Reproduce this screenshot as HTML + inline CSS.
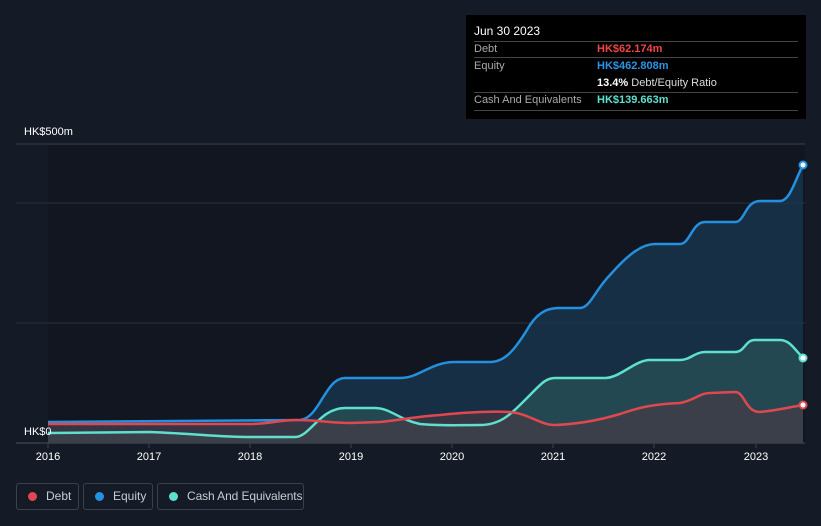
<!DOCTYPE html>
<html><head><style>
html,body{margin:0;background:#151b26;width:821px;height:526px;overflow:hidden;font-family:"Liberation Sans",sans-serif;position:relative}
.tt{position:absolute;left:466px;top:15px;width:340px;height:104px;background:#000;color:#fff;font-size:12px}
.tt .r{position:absolute;left:8px;right:8px;border-top:1px solid #444}
.lg{position:absolute;top:483px;height:27px;border:1px solid #3a414c;border-radius:3px;color:#c8ccd2;font-size:12px;line-height:25px;box-sizing:border-box;white-space:nowrap}
.lg i{display:inline-block;width:9px;height:9px;border-radius:50%;margin:0 9px 0 11px;vertical-align:-1px}
</style></head><body>
<svg width="821" height="526" style="position:absolute;left:0;top:0">
<rect x="48" y="144" width="757" height="299" fill="#111620"/>
<line x1="16" y1="144" x2="805" y2="144" stroke="#3a404a"/>
<line x1="16" y1="203" x2="805" y2="203" stroke="#2a303a"/>
<line x1="16" y1="323" x2="805" y2="323" stroke="#2a303a"/>
<line x1="16" y1="443" x2="805" y2="443" stroke="#4a505a"/>
<g fill="#fff" font-size="11" text-anchor="middle">
<text x="48" y="460">2016</text><text x="149" y="460">2017</text><text x="250" y="460">2018</text><text x="351" y="460">2019</text><text x="452" y="460">2020</text><text x="553" y="460">2021</text><text x="654" y="460">2022</text><text x="756" y="460">2023</text>
</g>
<g stroke="#3a404a"><line x1="48" y1="443" x2="48" y2="448"/><line x1="149" y1="443" x2="149" y2="448"/><line x1="250" y1="443" x2="250" y2="448"/><line x1="351" y1="443" x2="351" y2="448"/><line x1="452" y1="443" x2="452" y2="448"/><line x1="553" y1="443" x2="553" y2="448"/><line x1="654" y1="443" x2="654" y2="448"/><line x1="756" y1="443" x2="756" y2="448"/></g>
<text x="24" y="135" fill="#fff" font-size="11">HK$500m</text>
<path d="M48 422 L300 420 C320 418 325 378 345 378 L400 378 C420 378 430 362 455 362 L490 362 C505 362 515 350 530 325 C540 310 550 308 560 308 L580 308 C590 308 595 290 610 275 C625 258 640 244 655 244 L680 244 C690 244 692 222 705 222 L735 222 C745 222 745 201 760 201 L780 201 C790 201 795 180 803 165 L803 443 L48 443Z" fill="#1a3a55" opacity="0.7"/>
<path d="M48 433 L150 432 C200 434 220 437 250 437 L295 437 C310 437 320 408 345 408 L375 408 C390 408 400 420 420 424 C440 426 460 425 480 425 C500 425 510 415 525 400 C540 385 545 378 555 378 L605 378 C620 378 635 360 650 360 L680 360 C690 360 695 352 705 352 L735 352 C745 352 745 340 755 340 L780 340 C790 340 795 350 803 358 L803 443 L48 443Z" fill="#2b5a5a" opacity="0.6"/>
<path d="M48 424 L250 424 C270 424 280 420 295 420 C320 420 330 423 350 423 L380 422 C400 420 420 416 440 415 C470 412 490 411 510 412 C530 414 540 425 555 425 C580 424 600 420 620 414 C640 407 655 404 680 403 C695 400 700 393 710 393 L735 392 C745 392 745 412 760 412 C780 410 790 407 803 405 L803 443 L48 443Z" fill="#4a3a44" opacity="0.6"/>
<path d="M48 422 L300 420 C320 418 325 378 345 378 L400 378 C420 378 430 362 455 362 L490 362 C505 362 515 350 530 325 C540 310 550 308 560 308 L580 308 C590 308 595 290 610 275 C625 258 640 244 655 244 L680 244 C690 244 692 222 705 222 L735 222 C745 222 745 201 760 201 L780 201 C790 201 795 180 803 165" fill="none" stroke="#2391e0" stroke-width="2.5"/>
<path d="M48 433 L150 432 C200 434 220 437 250 437 L295 437 C310 437 320 408 345 408 L375 408 C390 408 400 420 420 424 C440 426 460 425 480 425 C500 425 510 415 525 400 C540 385 545 378 555 378 L605 378 C620 378 635 360 650 360 L680 360 C690 360 695 352 705 352 L735 352 C745 352 745 340 755 340 L780 340 C790 340 795 350 803 358" fill="none" stroke="#5ee0cc" stroke-width="2.5"/>
<path d="M48 424 L250 424 C270 424 280 420 295 420 C320 420 330 423 350 423 L380 422 C400 420 420 416 440 415 C470 412 490 411 510 412 C530 414 540 425 555 425 C580 424 600 420 620 414 C640 407 655 404 680 403 C695 400 700 393 710 393 L735 392 C745 392 745 412 760 412 C780 410 790 407 803 405" fill="none" stroke="#e04850" stroke-width="2.5"/>
<text x="24" y="435" fill="#fff" font-size="11">HK$0</text>
<circle cx="803" cy="165" r="3.5" fill="#fff" stroke="#2391e0" stroke-width="2"/>
<circle cx="803" cy="358" r="3.5" fill="#fff" stroke="#5ee0cc" stroke-width="2"/>
<circle cx="803" cy="405" r="3.5" fill="#fff" stroke="#e04850" stroke-width="2"/>
</svg>
<div class="tt">
<div style="position:absolute;left:8px;top:9px">Jun 30 2023</div>
<div class="r" style="top:26px"></div>
<div style="position:absolute;left:8px;top:28px;color:#aaa;font-size:11px">Debt</div>
<div style="position:absolute;left:131px;top:28px;color:#f04448;font-weight:bold;font-size:11px">HK$62.174m</div>
<div class="r" style="top:42px"></div>
<div style="position:absolute;left:8px;top:45px;color:#aaa;font-size:11px">Equity</div>
<div style="position:absolute;left:131px;top:45px;color:#2a94e6;font-weight:bold;font-size:11px">HK$462.808m</div>
<div style="position:absolute;left:131px;top:62px;color:#ddd;font-size:11px"><b style="color:#fff">13.4%</b> Debt/Equity Ratio</div>
<div class="r" style="top:77px"></div>
<div style="position:absolute;left:8px;top:79px;color:#aaa;font-size:11px">Cash And Equivalents</div>
<div style="position:absolute;left:131px;top:79px;color:#5ee0cc;font-weight:bold;font-size:11px">HK$139.663m</div>
<div class="r" style="top:95px"></div>
</div>
<div class="lg" style="left:16px;width:63px"><i style="background:#e04850"></i>Debt</div>
<div class="lg" style="left:83px;width:70px"><i style="background:#2391e0"></i>Equity</div>
<div class="lg" style="left:157px;width:147px;letter-spacing:-0.1px"><i style="background:#5ee0cc"></i>Cash And Equivalents</div>
</body></html>
